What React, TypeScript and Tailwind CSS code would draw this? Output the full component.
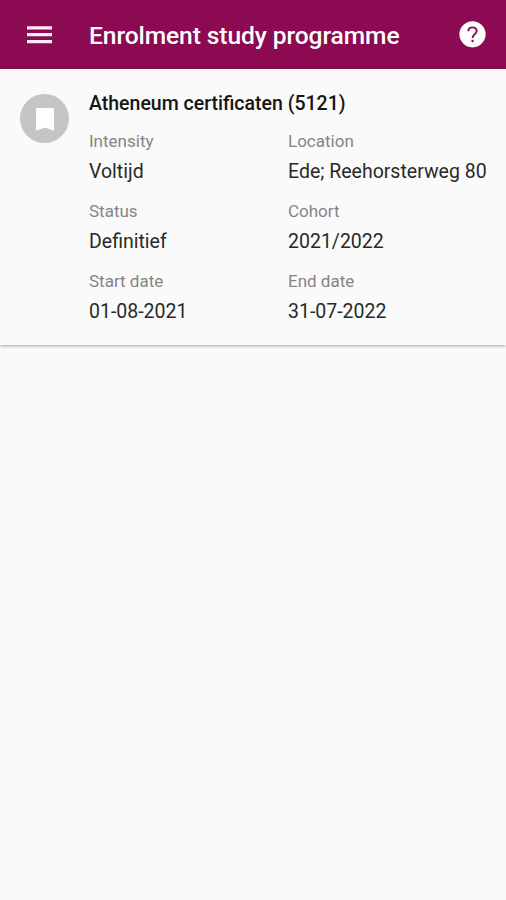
const fields = [
  ["Intensity", "Voltijd"],
  ["Location", "Ede; Reehorsterweg 80"],
  ["Status", "Definitief"],
  ["Cohort", "2021/2022"],
  ["Start date", "01-08-2021"],
  ["End date", "31-07-2022"],
];

export default function App() {
  return (
    <div className="flex h-[900px] w-full flex-col overflow-hidden bg-[#fafafa] font-['Roboto',sans-serif]">
      <header className="flex h-[69px] shrink-0 items-center bg-[#8b0a52] text-white">
        <svg className="ml-[27px] h-[18px] w-[25px] shrink-0" viewBox="0 0 25 18" fill="#fbeef4">
          <path d="M0 .2h25v3.2H0zM0 7h25v3.2H0zM0 14h25v3.2H0z" />
        </svg>
        <h1 className="ml-[37px] mt-[2px] flex-1 whitespace-nowrap text-[24.6px] font-medium leading-[30px] tracking-[-0.1px]">Enrolment study programme</h1>
        <svg className="mr-[20px] size-[27px] shrink-0" viewBox="0 0 27 27" fill="none">
          <circle cx="13.5" cy="13.3" r="13.1" fill="#fff" />
          <path d="M9.3 10.3C9.3 7.7 11.1 6.4 13.4 6.4c2.5 0 4.2 1.4 4.2 3.7 0 3-4 3.5-4 6.9" stroke="#8b0a52" strokeWidth="1.9" />
          <path d="M12.5 18.8h2.1v2.3h-2.1z" fill="#8b0a52" />
        </svg>
      </header>
      <main className="flex h-[276px] shrink-0 bg-[#fafafa] shadow-[0_1px_3px_rgba(0,0,0,0.36)]">
        <div className="ml-5 mt-[25px] flex size-[49px] shrink-0 items-center justify-center rounded-full bg-[#c5c5c5] pt-px text-white">
          <svg className="h-[23px] w-[18px]" viewBox="0 0 18 23" fill="currentColor">
            <path d="M1 0h16q1 0 1 1v21.7l-9-3.3-9 3.3V1q0-1 1-1z" />
          </svg>
        </div>
        <section className="ml-5 mt-[23px] flex-1">
          <h2 className="whitespace-nowrap text-[19.5px] font-medium leading-6 text-[#151515]">Atheneum certificaten (5121)</h2>
          <dl className="mt-[13px] grid grid-cols-[199px_1fr] gap-y-[12px]">
            {fields.map(([label, value]) => (
              <div key={label} className="h-[58px] whitespace-nowrap">
                <dt className="text-[17px] leading-6 text-[#858585]">{label}</dt>
                <dd className="mt-[7px] text-[19.5px] leading-6 text-[#292929]">{value}</dd>
              </div>
            ))}
          </dl>
        </section>
      </main>
    </div>
  );
}
